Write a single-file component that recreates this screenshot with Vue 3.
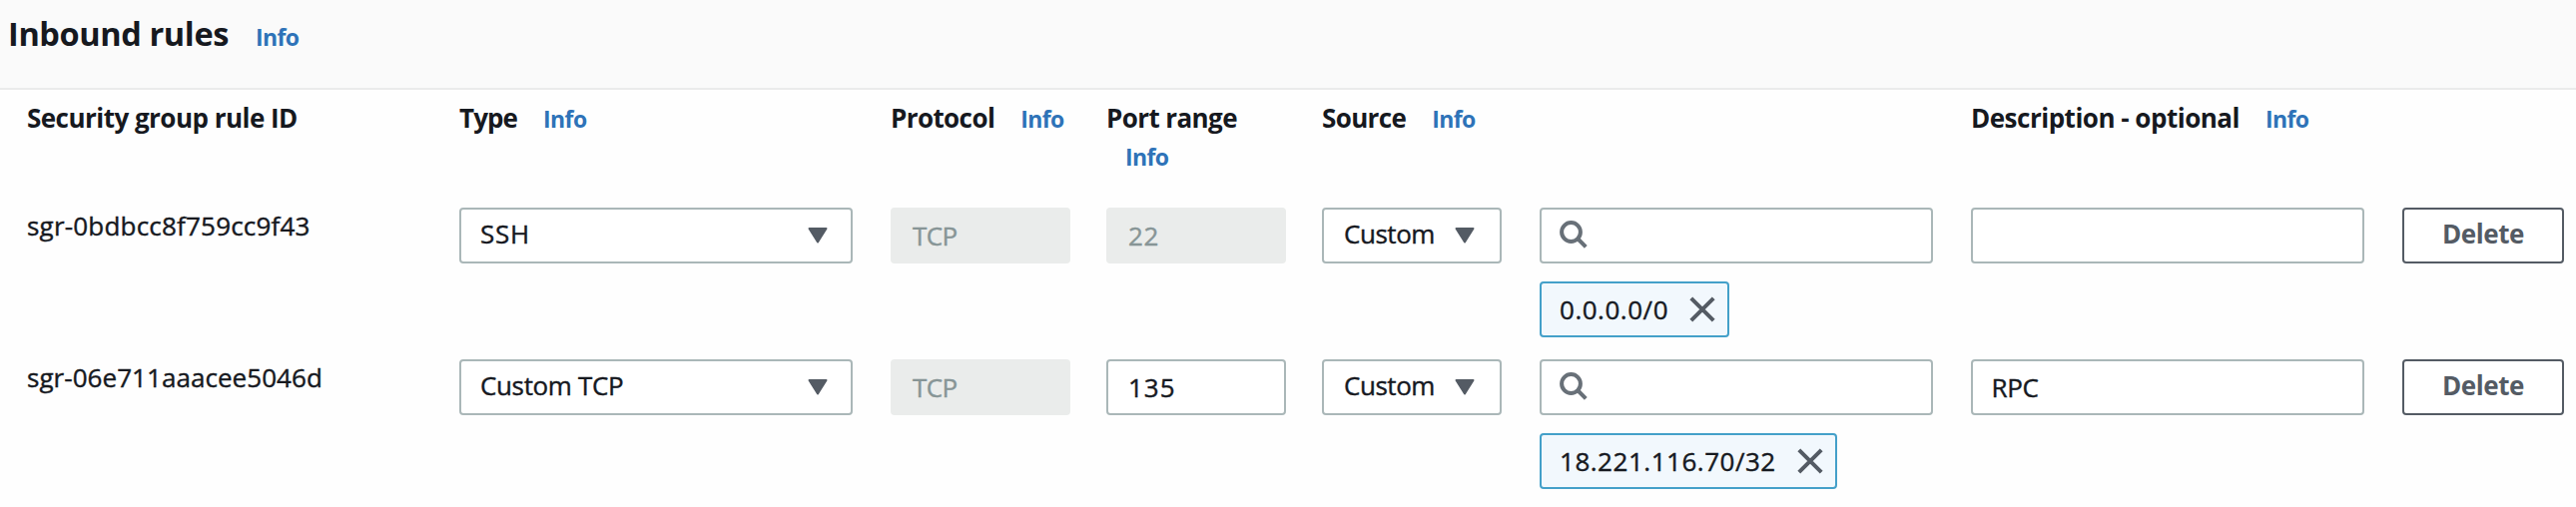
<script setup>
const columns = [
  { label: 'Security group rule ID', key: 'id', track: -0.53 },
  { label: 'Type', key: 'type', track: -0.9, info: true },
  { label: 'Protocol', key: 'protocol', track: -0.6, info: true },
  { label: 'Port range', key: 'port', track: -0.6, info: true },
  { label: 'Source', key: 'source', track: -0.64, info: true },
  { label: '', key: 'search' },
  { label: 'Description - optional', key: 'desc', track: -0.5, info: true },
  { label: '', key: 'action' },
]

const rules = [
  { id: 'sgr-0bdbcc8f759cc9f43', idTrack: 0.2, type: 'SSH', typeTrack: 0.8, port: '22', portTrack: 0.6, locked: true, cidr: '0.0.0.0/0', desc: '' },
  { id: 'sgr-06e711aaacee5046d', idTrack: 0.05, type: 'Custom TCP', typeTrack: -0.35, port: '135', portTrack: 1, locked: false, cidr: '18.221.116.70/32', desc: 'RPC' },
]

const track = (v) => ({ letterSpacing: (v || 0) + 'px' })
</script>

<template>
  <section class="panel">
    <header class="panel-head">
      <h2>Inbound rules</h2>
      <a class="info">Info</a>
    </header>

    <div class="grid labels">
      <div v-for="c in columns" :key="c.key" class="label" :class="c.key">
        <span class="name" :style="track(c.track)">{{ c.label }}</span>
        <wbr /><a v-if="c.info" class="info">Info</a>
      </div>
    </div>

    <div v-for="r in rules" :key="r.id" class="grid rule">
      <div class="rule-id" :style="track(r.idTrack)">{{ r.id }}</div>
      <div class="cell">
        <div class="box select">
          <span :style="track(r.typeTrack)">{{ r.type }}</span>
          <svg class="caret" viewBox="0 0 20 16"><path d="M1.5 1h17L10 14.5z" /></svg>
        </div>
      </div>
      <div class="cell narrow"><div class="box locked proto">TCP</div></div>
      <div class="cell narrow">
        <div class="box" :class="{ locked: r.locked }" :style="track(r.portTrack)">{{ r.port }}</div>
      </div>
      <div class="cell">
        <div class="box select source-kind">
          <span>Custom</span>
          <svg class="caret" viewBox="0 0 20 16"><path d="M1.5 1h17L10 14.5z" /></svg>
        </div>
      </div>
      <div class="cell">
        <div class="box search">
          <svg viewBox="0 0 28 28"><circle cx="11.5" cy="11.5" r="9.4" /><path d="M18 18l8.3 8.3" /></svg>
        </div>
        <div class="chip">
          <span>{{ r.cidr }}</span>
          <svg viewBox="0 0 26 26"><path d="M1.8 1.8l22.4 22.4M24.2 1.8L1.8 24.2" /></svg>
        </div>
      </div>
      <div class="cell"><div class="box desc-box">{{ r.desc }}</div></div>
      <button class="delete">Delete</button>
    </div>
  </section>
</template>

<style>
body { background: #fff; }
</style>

<style scoped>
.panel {
  width: 2580px;
  height: 508px;
  overflow: hidden;
  background: #fefefe;
  color: #16191f;
  font: 400 26px/38px "Open Sans", "Noto Sans", sans-serif;
}
.panel-head {
  box-sizing: border-box;
  height: 90px;
  padding: 11px 8px 0;
  display: flex;
  align-items: baseline;
  background: #fafafa;
  border-bottom: 2px solid #eaebeb;
}
h2 {
  margin: 0;
  font-size: 32.5px;
  line-height: 46px;
  font-weight: 700;
  letter-spacing: -0.38px;
}
.info {
  color: #2e73b8;
  font-size: 23px;
  font-weight: 700;
  letter-spacing: -0.6px;
  margin-left: 26px;
}
.panel-head .info { margin-left: 27px; }
.grid {
  display: grid;
  grid-template-columns: 433px 432px 216px 216px 218px 432px 432px 162px;
  padding-left: 27px;
  align-items: start;
}
.labels {
  height: 118px;
  padding-top: 9px;
  box-sizing: border-box;
}
.label { font-weight: 700; }
.label.port { padding-right: 36px; }
.label.port .info { margin-left: 19px; }
.name { white-space: nowrap; }
.rule { height: 152px; }
.rule-id, .box, .chip { -webkit-text-stroke: 0.4px currentColor; }
.rule-id { line-height: 36px; }
.cell { padding-right: 38px; }
.cell.narrow { padding-right: 36px; }
.box {
  box-sizing: border-box;
  height: 56px;
  padding: 0 20px;
  border: 2px solid #aab7b8;
  border-radius: 4px;
  line-height: 52px;
  background: #fff;
}
.select {
  display: flex;
  align-items: center;
  justify-content: space-between;
  padding: 0 23px 0 19px;
}
.select span { line-height: 48px; margin-top: -4px; }
.source-kind { letter-spacing: -0.46px; padding: 0 25px 0 20px; }
.caret {
  width: 20px;
  height: 16px;
  fill: #545b64;
  stroke: #545b64;
  stroke-width: 2;
  stroke-linejoin: round;
}
.locked {
  background: #eaeceb;
  border-color: #eaeceb;
  color: #879596;
}
.proto { letter-spacing: -0.6px; }
.search { padding: 11px 17.5px; }
.search svg {
  display: block;
  width: 28px;
  height: 28px;
  fill: none;
  stroke: #687078;
  stroke-width: 4;
}
.chip {
  box-sizing: border-box;
  width: fit-content;
  height: 56px;
  margin-top: 18px;
  padding: 0 12px 0 18px;
  display: flex;
  align-items: center;
  gap: 21px;
  border: 2px solid #44a0c9;
  border-radius: 4px;
  background: #f2f8fd;
  letter-spacing: 0.52px;
}
.chip span { margin-top: -1px; }
.chip svg {
  width: 26px;
  height: 26px;
  fill: none;
  stroke: #545b64;
  stroke-width: 4;
}
.desc-box { letter-spacing: -0.3px; padding-left: 18.5px; }
.delete {
  box-sizing: border-box;
  width: 162px;
  height: 56px;
  padding: 0 0 4px;
  border: 2px solid #545b64;
  border-radius: 4px;
  background: #fff;
  color: #545b64;
  font: 700 26px/48px "Open Sans", "Noto Sans", sans-serif;
  letter-spacing: -0.45px;
}
</style>
